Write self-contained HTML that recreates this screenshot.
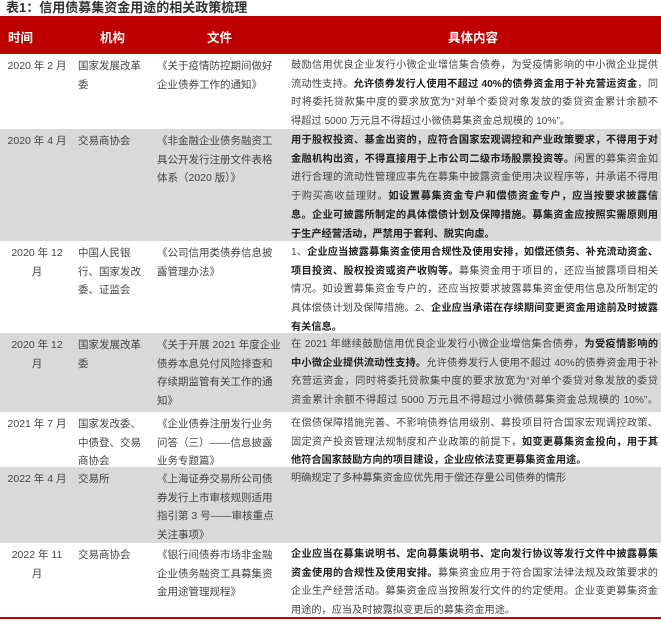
<!DOCTYPE html>
<html><head><meta charset="utf-8"><style>
*{margin:0;padding:0;box-sizing:border-box}
body{width:661px;height:621px;background:#fff;position:relative;overflow:hidden;font-family:"Liberation Sans","Noto Sans CJK SC",sans-serif;color:#444;font-size:10.5px}
.title{position:absolute;left:6px;top:0;font-size:13px;font-weight:bold;color:#333;line-height:16px}
.hdr{position:absolute;left:0;top:16px;width:661px;height:38px;background:#c00000;color:#fff;font-weight:bold;font-size:12.5px}
.hdr span{position:absolute;top:11px}
.row{position:absolute;left:0;width:661px}
.g{background:#d9d9d9}
.c{position:absolute;top:3px;line-height:18.7px}
.t{left:2px;width:70px;text-align:center}
.o{left:78px;width:68px}
.f{left:157px;width:125px;white-space:nowrap}
.x{left:291px;width:367px;font-size:10.2px}
.x div{white-space:nowrap;overflow:visible}
.x .j{text-align:justify;text-align-last:justify}
b{color:#222}
.line{position:absolute;left:0;top:617px;width:661px;height:1.5px;background:#c00000}
</style></head><body>
<div class="title">表1：信用债募集资金用途的相关政策梳理</div>
<div class="hdr"><span style="left:8px">时间</span><span style="left:100px">机构</span><span style="left:207px">文件</span><span style="left:448px">具体内容</span></div>

<div class="row" style="top:54px;height:75px">
<div class="c t">2020 年 2 月</div>
<div class="c o">国家发展改革委</div>
<div class="c f">《关于疫情防控期间做好<br>企业债券工作的通知》</div>
<div class="c x">
<div class="j">鼓励信用优良企业发行小微企业增信集合债券，为受疫情影响的中小微企业提供</div>
<div class="j">流动性支持。<b>允许债券发行人使用不超过 40%的债券资金用于补充营运资金</b>，同</div>
<div class="j">时将委托贷款集中度的要求放宽为“对单个委贷对象发放的委贷资金累计余额不</div>
<div>得超过 5000 万元且不得超过小微债募集资金总规模的 10%”。</div>
</div>
</div>

<div class="row g" style="top:129px;height:112px">
<div class="c t">2020 年 4 月</div>
<div class="c o">交易商协会</div>
<div class="c f">《非金融企业债务融资工<br>具公开发行注册文件表格<br>体系（2020 版）》</div>
<div class="c x">
<div class="j"><b>用于股权投资、基金出资的，应符合国家宏观调控和产业政策要求，不得用于对</b></div>
<div class="j"><b>金融机构出资，不得直接用于上市公司二级市场股票投资等。</b>闲置的募集资金如</div>
<div class="j">进行合理的流动性管理应事先在募集中披露资金使用决议程序等，并承诺不得用</div>
<div class="j">于购买高收益理财。<b>如设置募集资金专户和偿债资金专户，应当按要求披露信</b></div>
<div class="j"><b>息。企业可披露所制定的具体偿债计划及保障措施。募集资金应按照实需原则用</b></div>
<div><b>于生产经营活动，严禁用于套利、脱实向虚。</b></div>
</div>
</div>

<div class="row" style="top:241px;height:92px">
<div class="c t">2020 年 12<br>月</div>
<div class="c o">中国人民银行、国家发改委、证监会</div>
<div class="c f">《公司信用类债券信息披<br>露管理办法》</div>
<div class="c x">
<div class="j">1、<b>企业应当披露募集资金使用合规性及使用安排，如偿还债务、补充流动资金、</b></div>
<div class="j"><b>项目投资、股权投资或资产收购等。</b>募集资金用于项目的，还应当披露项目相关</div>
<div class="j">情况。如设置募集资金专户的，还应当按要求披露募集资金使用信息及所制定的</div>
<div class="j">具体偿债计划及保障措施。2、<b>企业应当承诺在存续期间变更资金用途前及时披露</b></div>
<div><b>有关信息。</b></div>
</div>
</div>

<div class="row g" style="top:333px;height:79px">
<div class="c t">2020 年 12<br>月</div>
<div class="c o">国家发展改革委</div>
<div class="c f">《关于开展 2021 年度企业<br>债券本息兑付风险排查和<br>存续期监管有关工作的通<br>知》</div>
<div class="c x">
<div class="j">在 2021 年继续鼓励信用优良企业发行小微企业增信集合债券，<b>为受疫情影响的</b></div>
<div class="j"><b>中小微企业提供流动性支持。</b>允许债券发行人使用不超过 40%的债券资金用于补</div>
<div class="j">充营运资金，同时将委托贷款集中度的要求放宽为“对单个委贷对象发放的委贷</div>
<div class="j">资金累计余额不得超过 5000 万元且不得超过小微债募集资金总规模的 10%”。</div>
</div>
</div>

<div class="row" style="top:412px;height:55px">
<div class="c t">2021 年 7 月</div>
<div class="c o">国家发改委、中债登、交易商协会</div>
<div class="c f">《企业债券注册发行业务<br>问答（三）——信息披露<br>业务专题篇》</div>
<div class="c x">
<div class="j">在偿债保障措施完善、不影响债券信用级别、募投项目符合国家宏观调控政策、</div>
<div class="j">固定资产投资管理法规制度和产业政策的前提下，<b>如变更募集资金投向，用于其</b></div>
<div><b>他符合国家鼓励方向的项目建设，企业应依法变更募集资金用途。</b></div>
</div>
</div>

<div class="row g" style="top:467px;height:76px">
<div class="c t">2022 年 4 月</div>
<div class="c o">交易所</div>
<div class="c f">《上海证券交易所公司债<br>券发行上市审核规则适用<br>指引第 3 号——审核重点<br>关注事项》</div>
<div class="c x"><div>明确规定了多种募集资金应优先用于偿还存量公司债券的情形</div></div>
</div>

<div class="row" style="top:543px;height:74px">
<div class="c t">2022 年 11<br>月</div>
<div class="c o">交易商协会</div>
<div class="c f">《银行间债券市场非金融<br>企业债务融资工具募集资<br>金用途管理规程》</div>
<div class="c x">
<div class="j"><b>企业应当在募集说明书、定向募集说明书、定向发行协议等发行文件中披露募集</b></div>
<div class="j"><b>资金使用的合规性及使用安排。</b>募集资金应用于符合国家法律法规及政策要求的</div>
<div class="j">企业生产经营活动。募集资金应当按照发行文件的约定使用。企业变更募集资金</div>
<div>用途的，应当及时披露拟变更后的募集资金用途。</div>
</div>
</div>
<div class="line"></div>
</body></html>
